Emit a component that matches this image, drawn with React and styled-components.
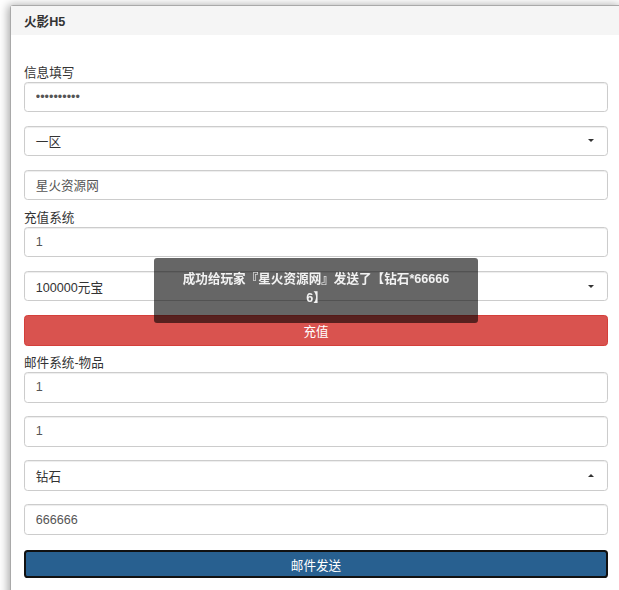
import React from "react";
import styled, { createGlobalStyle } from "styled-components";

const FONT = `"Liberation Sans", "Noto Sans CJK SC", sans-serif`;

const GlobalStyle = createGlobalStyle`
  html, body {
    margin: 0;
    padding: 0;
    background: #fff;
    overflow: hidden;
  }
  body {
    font-family: ${FONT};
    font-size: 12.6px;
    color: #333;
  }
  * { box-sizing: border-box; }
`;

/* 页面 */
const Page = styled.div`
  padding: 5px 0 0 10px;
  height: 590px;
  overflow: hidden;
`;

/* 面板 */
const Panel = styled.div`
  width: 612px;
  min-height: 600px;
  border: 1px solid #a9a9a9;
  border-radius: 3px;
  background: #fff;
  box-shadow: -2px 0 10px rgba(0, 0, 0, 0.35);
`;

const PanelHeading = styled.div`
  height: 29px;
  padding: 0 13px;
  display: flex;
  align-items: center;
  background: #f5f5f5;
  font-weight: bold;
  color: #333;
`;

const PanelBody = styled.div`
  padding: 28.5px 13px 20px;
  display: flex;
  flex-direction: column;
  gap: 8.5px;
`;

const Section = styled.div`
  display: flex;
  flex-direction: column;
`;

const Label = styled.div`
  height: 18px;
  line-height: 18px;
  color: #333;
`;

const Fields = styled.div`
  display: flex;
  flex-direction: column;
  gap: 13.5px;
`;

const Input = styled.input`
  width: 584px;
  height: 30.6px;
  padding: 0 10.8px;
  border: 1px solid #ccc;
  border-radius: 3.6px;
  background: #fff;
  font-family: ${FONT};
  font-size: 12.6px;
  color: #555;
  outline: none;
  box-shadow: inset 0 1px 1px rgba(0, 0, 0, 0.075);
`;

const Select = styled.div`
  width: 584px;
  height: 30.6px;
  padding: 0 13px 0 10.8px;
  display: flex;
  align-items: center;
  justify-content: space-between;
  border: 1px solid #ccc;
  border-radius: 3.6px;
  background: #fff;
  color: #333;
  box-shadow: inset 0 1px 1px rgba(0, 0, 0, 0.075);
`;

const Caret = styled.span`
  width: 0;
  height: 0;
  border-left: 3px solid transparent;
  border-right: 3px solid transparent;
  ${({ $up }) =>
    $up ? "border-bottom: 3.5px solid #333;" : "border-top: 3.5px solid #333;"}
`;

const Button = styled.button`
  width: 584px;
  height: ${({ $focus }) => ($focus ? "28.5px" : "30.6px")};
  margin-top: ${({ $focus }) => ($focus ? "1.5px" : "0")};
  padding: 0;
  border-radius: 3.6px;
  font-family: ${FONT};
  font-size: 12.6px;
  color: #fff;
  cursor: pointer;
  border: ${({ $focus }) => ($focus ? "2px solid #111" : "1px solid #d43f3a")};
  background: ${({ $variant }) => ($variant === "primary" ? "#286090" : "#d9534f")};
`;

/* 提示 */
const Toast = styled.div`
  position: fixed;
  left: 154px;
  top: 258px;
  width: 324px;
  height: 65px;
  padding: 11.5px 26px 0;
  border-radius: 3px;
  background: rgba(0, 0, 0, 0.6);
  color: #f2f2f2;
  font-weight: bold;
  font-size: 12.6px;
  line-height: 19px;
  text-align: center;
  word-break: break-all;
`;

const App = () => {
  return (
    <Page>
      <GlobalStyle />
      <Panel>
        <PanelHeading>火影H5</PanelHeading>
        <PanelBody>
          <Section>
            <Label>信息填写</Label>
            <Fields>
              <Input type="password" defaultValue="1234567890" readOnly />
              <Select>
                <span>一区</span>
                <Caret />
              </Select>
              <Input defaultValue="星火资源网" readOnly />
            </Fields>
          </Section>

          <Section>
            <Label>充值系统</Label>
            <Fields>
              <Input defaultValue="1" readOnly />
              <Select>
                <span>100000元宝</span>
                <Caret />
              </Select>
              <Button $variant="danger">充值</Button>
            </Fields>
          </Section>

          <Section>
            <Label>邮件系统-物品</Label>
            <Fields>
              <Input defaultValue="1" readOnly />
              <Input defaultValue="1" readOnly />
              <Select>
                <span>钻石</span>
                <Caret $up />
              </Select>
              <Input defaultValue="666666" readOnly />
              <Button $variant="primary" $focus>
                邮件发送
              </Button>
            </Fields>
          </Section>
        </PanelBody>
      </Panel>
      <Toast>成功给玩家『星火资源网』发送了【钻石*666666】</Toast>
    </Page>
  );
};

export default App;
